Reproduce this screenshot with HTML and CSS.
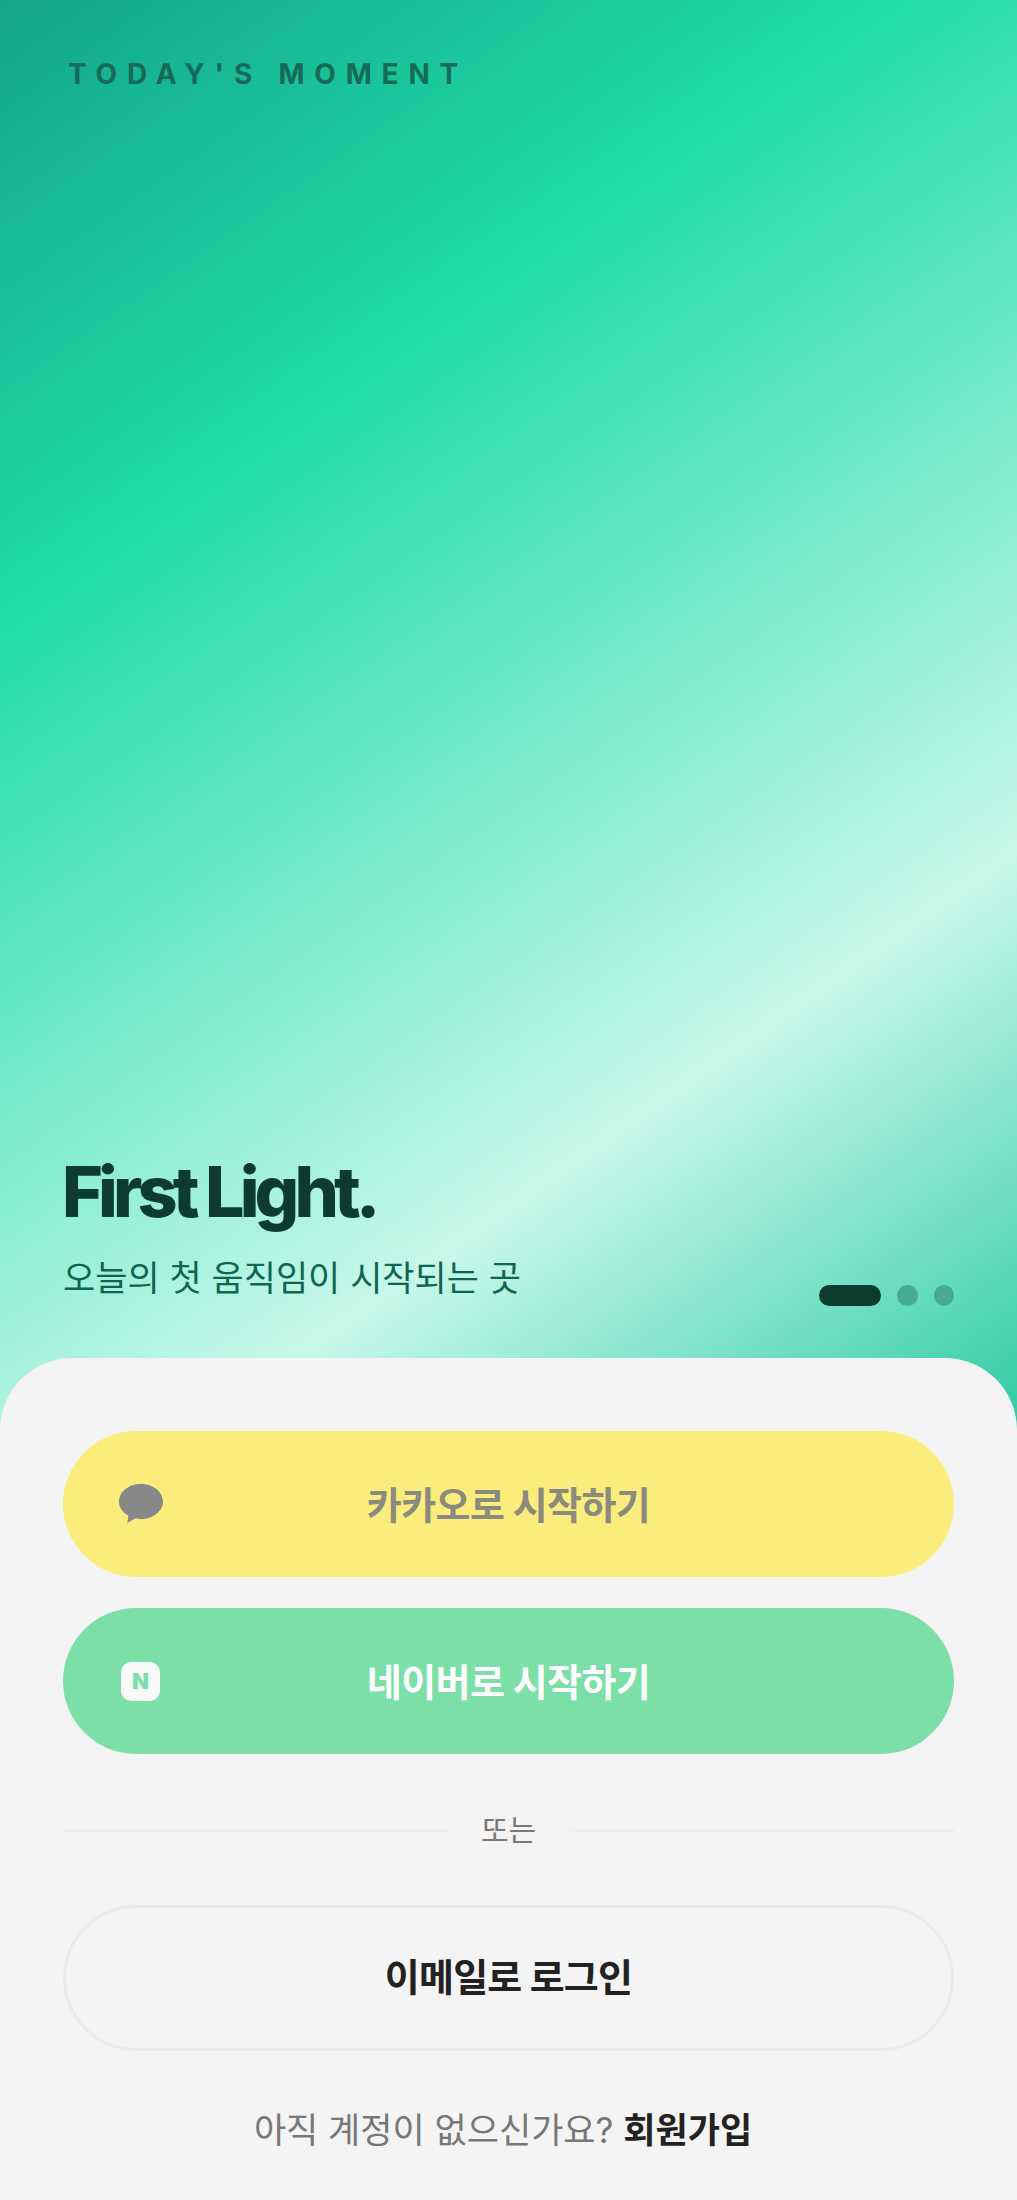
FILE: index.html
```html
<!DOCTYPE html>
<html lang="ko">
<head>
  <meta charset="UTF-8" />
  <meta name="viewport" content="width=device-width, initial-scale=1.0"/>
  <title>First Light</title>
  <link rel="stylesheet" href="styles.css">
</head>
<body>
  <div class="page">
    <section class="hero">
      <p class="eyebrow">TODAY'S MOMENT</p>
      <div class="hero-bottom">
        <div class="hero-copy">
          <h1>First Light.</h1>
          <p class="tagline">오늘의 첫 움직임이 시작되는 곳</p>
        </div>
        <div class="dots">
          <span class="dot active"></span>
          <span class="dot"></span>
          <span class="dot"></span>
        </div>
      </div>
    </section>

    <section class="sheet">
      <a class="btn btn-kakao" href="#">
        <svg class="btn-icon kakao-icon" viewBox="0 0 44 42" width="44" height="42" aria-hidden="true">
          <path d="M22 1C10 1 0 8.700 0 18.500C0 24.500 3.700 29.500 9.500 32.500L8.300 40L16.500 35.300C18.300 35.700 20.100 36 22 36C34 36 44 28.200 44 18.500C44 8.700 34 1 22 1Z"/>
        </svg>
        <span>카카오로 시작하기</span>
      </a>
      <a class="btn btn-naver" href="#">
        <span class="btn-icon naver-icon">N</span>
        <span>네이버로 시작하기</span>
      </a>

      <div class="divider"><span>또는</span></div>

      <a class="btn btn-email" href="#"><span>이메일로 로그인</span></a>

      <p class="signup">아직 계정이 없으신가요? <a href="#">회원가입</a></p>
    </section>
  </div>
</body>
</html>
```

FILE: styles.css
```css
html, body {
  margin: 0;
  padding: 0;
  background: #f4f4f4;
  font-family: Inter, "Noto Sans CJK KR", sans-serif;
}

.page {
  width: 1017px;
  height: 2200px;
  overflow: hidden;
  display: flex;
  flex-direction: column;
}

.hero {
  height: 1430px;
  padding: 0 63px 124px;
  box-sizing: border-box;
  display: flex;
  flex-direction: column;
  justify-content: space-between;
  background: linear-gradient(145deg, #14a588 0%, #1fdca8 29%, #c8f8ea 73%, #2fcba5 100%);
}

.eyebrow {
  margin: 0;
  padding: 57px 0 0 5px;
  font-size: 28px;
  line-height: 34px;
  font-weight: 700;
  letter-spacing: 0.35em;
  color: #156b57;
}

.hero-bottom {
  display: flex;
  justify-content: space-between;
  align-items: flex-end;
}

.hero-copy {
  margin-bottom: 3px;
}

.hero h1 {
  margin: 0 0 0 -1px;
  font-size: 70px;
  line-height: 84px;
  font-weight: 800;
  letter-spacing: -0.07em;
  color: #0d3b2e;
}

.tagline {
  margin: 19px 0 0;
  font-size: 35px;
  line-height: 50px;
  font-weight: 400;
  color: #0f6650;
}

.dots {
  display: flex;
  gap: 16px;
}

.dot {
  width: 20.5px;
  height: 21px;
  border-radius: 11px;
  background: #47aa92;
}

.dot.active {
  width: 62px;
  background: #0d3b2e;
}

.sheet {
  flex: 1;
  margin-top: -72px;
  padding: 73px 63px 0;
  border-radius: 72px 72px 0 0;
  background: #f4f4f4;
  display: flex;
  flex-direction: column;
}

.btn {
  position: relative;
  height: 146px;
  padding-bottom: 3px;
  box-sizing: border-box;
  border-radius: 73px;
  display: flex;
  align-items: center;
  justify-content: center;
  font-size: 38px;
  font-weight: 700;
  letter-spacing: -0.6px;
  text-decoration: none;
}

.btn-icon {
  position: absolute;
  left: 56px;
  margin-top: 3px;
}

.btn-kakao {
  background: #faed7c;
  color: #8a8a7e;
}

.kakao-icon {
  fill: #888888;
}

.btn-naver {
  margin-top: 31px;
  background: #7bdfa7;
  color: #fff;
}

.naver-icon {
  left: 58px;
  width: 39px;
  height: 39px;
  border-radius: 10px;
  background: #f8f9f8;
  color: #7bdfa7;
  font-size: 22px;
  font-weight: 900;
  letter-spacing: 0;
  display: flex;
  align-items: center;
  justify-content: center;
}

.divider {
  margin-top: 56px;
  display: flex;
  align-items: center;
  gap: 33px;
  font-size: 30px;
  line-height: 40px;
  color: #777;
}

.divider::before,
.divider::after {
  content: "";
  flex: 1;
  height: 3px;
  background: #eeeeee;
}

.btn-email {
  margin-top: 55px;
  padding-bottom: 7px;
  border: 3px solid #ebebeb;
  color: #222;
  letter-spacing: -0.8px;
}

.signup {
  margin: 56px 0 0;
  padding-right: 11px;
  text-align: center;
  font-size: 35px;
  line-height: 46px;
  color: #777;
}

.signup a {
  font-weight: 700;
  color: #222;
  text-decoration: none;
}
```
